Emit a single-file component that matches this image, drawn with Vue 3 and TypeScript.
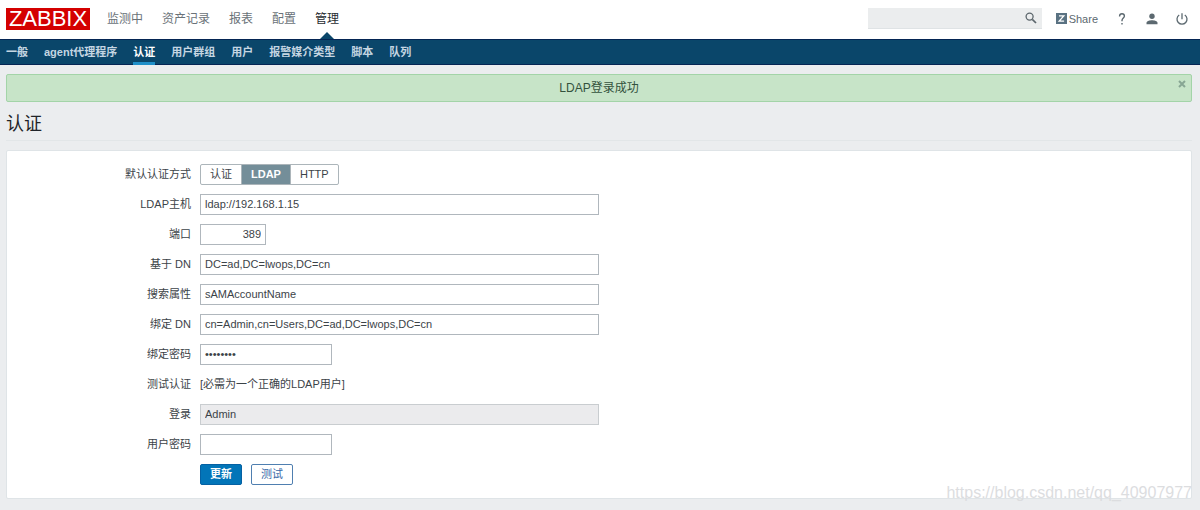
<script setup lang="ts">
import { ref } from 'vue'

interface Field {
  id: string
  label: string
  value: string
  type: 'text' | 'password'
  size: 'wide' | 'medium' | 'small'
  disabled?: boolean
}

const mainMenu = ['监测中', '资产记录', '报表', '配置', '管理']
const activeMain = '管理'
const subMenu = ['一般', 'agent代理程序', '认证', '用户群组', '用户', '报警媒介类型', '脚本', '队列']
const activeSub = '认证'

const methods = ['认证', 'LDAP', 'HTTP']
const method = ref('LDAP')
const search = ref('')
const messageVisible = ref(true)

const serverFields = ref<Field[]>([
  { id: 'host', label: 'LDAP主机', value: 'ldap://192.168.1.15', type: 'text', size: 'wide' },
  { id: 'port', label: '端口', value: '389', type: 'text', size: 'small' },
  { id: 'base-dn', label: '基于 DN', value: 'DC=ad,DC=lwops,DC=cn', type: 'text', size: 'wide' },
  { id: 'search-attribute', label: '搜索属性', value: 'sAMAccountName', type: 'text', size: 'wide' },
  { id: 'bind-dn', label: '绑定 DN', value: 'cn=Admin,cn=Users,DC=ad,DC=lwops,DC=cn', type: 'text', size: 'wide' },
  { id: 'bind-password', label: '绑定密码', value: 'password', type: 'password', size: 'medium' },
])
const userFields = ref<Field[]>([
  { id: 'login', label: '登录', value: 'Admin', type: 'text', size: 'wide', disabled: true },
  { id: 'user-password', label: '用户密码', value: '', type: 'password', size: 'medium' },
])
</script>

<template>
  <div class="page">
    <header class="top">
      <a class="logo" href="#">ZABBIX</a>
      <nav class="main-menu">
        <a v-for="item in mainMenu" :key="item" href="#" :class="{ active: item === activeMain }">{{ item }}</a>
      </nav>
      <div class="tools">
        <form class="search" @submit.prevent>
          <input v-model="search" type="text" aria-label="搜索" />
          <button type="submit" aria-label="搜索">
            <svg width="12" height="12" viewBox="0 0 12 12" fill="none" stroke="#5c666c">
              <circle cx="4.6" cy="4.6" r="3.5" stroke-width="1.3" />
              <path d="M7.3 7.3L11 11" stroke-width="1.7" />
            </svg>
          </button>
        </form>
        <a class="share" href="#">
          <svg width="11" height="11" viewBox="0 0 11 11">
            <rect width="11" height="11" fill="#5a7282" />
            <path d="M3 2.9H7.8L3.2 8.1H8.1" fill="none" stroke="#fff" stroke-width="1.3" />
          </svg>
          Share
        </a>
        <a class="icon" href="#" aria-label="帮助">
          <svg width="12" height="14" viewBox="0 0 12 14" fill="none" stroke="#5c6970" stroke-width="1.4">
            <path d="M3.6 4.5V4.1C3.6 2.5 4.6 1.8 6 1.8S8.4 2.6 8.4 4C8.4 6 6 6.1 6 8.6V9.3" />
            <path d="M6 10.9V12.4" />
          </svg>
        </a>
        <a class="icon" href="#" aria-label="用户资料">
          <svg width="12" height="12" viewBox="0 0 12 12" fill="#5c6970">
            <circle cx="6" cy="3.2" r="2.7" />
            <path d="M.5 11.2V9.8C.5 8 3.4 7.2 6 7.2S11.5 8 11.5 9.8V11.2Z" />
          </svg>
        </a>
        <a class="icon" href="#" aria-label="退出">
          <svg width="12" height="12" viewBox="0 0 12 12" fill="none" stroke="#5c6970" stroke-width="1.3">
            <path d="M3.2 2A5 5 0 1 0 8.8 2" />
            <path d="M6 .3V6.3" />
          </svg>
        </a>
      </div>
    </header>

    <nav class="sub-menu">
      <a v-for="item in subMenu" :key="item" href="#" :class="{ active: item === activeSub }">{{ item }}</a>
    </nav>

    <main>
      <div v-if="messageVisible" class="message" role="status">
        LDAP登录成功
        <button class="close" type="button" aria-label="关闭" @click="messageVisible = false">
          <svg width="8" height="8" viewBox="0 0 8 8" stroke="#88a694" stroke-width="2">
            <path d="M1 1L7 7M7 1L1 7" />
          </svg>
        </button>
      </div>
      <h1>认证</h1>

      <form class="panel" @submit.prevent>
        <div class="row">
          <span id="method-label" class="label">默认认证方式</span>
          <div class="segments" role="radiogroup" aria-labelledby="method-label">
            <label v-for="item in methods" :key="item" :class="{ checked: item === method }">
              <input v-model="method" type="radio" name="method" :value="item" />{{ item }}
            </label>
          </div>
        </div>
        <div v-for="field in serverFields" :key="field.id" class="row">
          <label class="label" :for="field.id">{{ field.label }}</label>
          <input :id="field.id" v-model="field.value" class="field" :class="field.size" :type="field.type" />
        </div>
        <div class="row">
          <span class="label">测试认证</span>
          <span class="note">[必需为一个正确的LDAP用户]</span>
        </div>
        <div v-for="field in userFields" :key="field.id" class="row">
          <label class="label" :for="field.id">{{ field.label }}</label>
          <input
            :id="field.id"
            v-model="field.value"
            class="field"
            :class="field.size"
            :type="field.type"
            :disabled="field.disabled"
          />
        </div>
        <div class="row">
          <span class="label"></span>
          <div class="actions">
            <button class="primary" type="submit">更新</button>
            <button type="button">测试</button>
          </div>
        </div>
      </form>
    </main>
    <div class="watermark">https://blog.csdn.net/qq_40907977</div>
  </div>
</template>

<style>
html {
  background: #ebedef;
}
body {
  margin: 0;
}
</style>

<style scoped>
.page {
  position: relative;
  font-family: "Liberation Sans", Arial, "Noto Sans CJK SC", sans-serif;
  font-size: 11px;
  line-height: 16px;
  color: #3c4348;
  padding-bottom: 12px;
}
.page * {
  box-sizing: border-box;
}
a {
  text-decoration: none;
  color: inherit;
}
input,
button {
  font: inherit;
  color: inherit;
  margin: 0;
}
svg {
  display: block;
}
.top {
  display: flex;
  align-items: center;
  height: 39px;
  padding: 0 12px 2px 6px;
  background: #fff;
}
.logo {
  width: 84px;
  height: 22px;
  line-height: 22px;
  font-size: 22px;
  text-align: center;
  color: #fff;
  background: #d40000;
}
.main-menu {
  display: flex;
  gap: 19px;
  align-self: stretch;
  margin-left: 17px;
  font-size: 12px;
  line-height: 39px;
  color: #6a7278;
}
.main-menu .active {
  position: relative;
  color: #262b30;
}
.main-menu .active::after {
  content: "";
  position: absolute;
  left: 50%;
  bottom: -2px;
  margin-left: -7px;
  border: 7px solid transparent;
  border-top: 0;
  border-bottom-color: #0a466a;
}
.tools {
  display: flex;
  align-items: center;
  margin-left: auto;
  color: #5c6970;
}
.search {
  display: flex;
  width: 174px;
  height: 21px;
  margin-right: 14px;
  background: #ebedee;
  border-bottom: 1px solid #dfe3e5;
}
.search input {
  flex: 1;
  min-width: 0;
  border: 0;
  padding: 0 5px;
  background: transparent;
}
.search button {
  display: flex;
  align-items: center;
  border: 0;
  padding: 0 5px;
  background: transparent;
}
.share {
  display: flex;
  align-items: center;
  gap: 2px;
  margin-right: 18px;
}
.icon + .icon {
  margin-left: 18px;
}
.sub-menu {
  display: flex;
  gap: 16px;
  height: 26px;
  padding: 0 6px;
  border-top: 1px solid #052554;
  border-bottom: 1px solid #052554;
  background: #0a466a;
  color: #c5d6e2;
  font-weight: bold;
  line-height: 24px;
}
.sub-menu .active {
  height: 25px;
  color: #fff;
  border-bottom: 3px solid #1f8fc8;
}
main {
  padding: 9px 8px 0 6px;
}
.message {
  position: relative;
  height: 28px;
  line-height: 27px;
  font-size: 12px;
  text-align: center;
  color: #33523d;
  background: #c7e4c8;
  border: 1px solid #a3d4a8;
  border-radius: 2px;
}
.close {
  position: absolute;
  top: 5px;
  right: 5px;
  border: 0;
  padding: 0;
  background: transparent;
}
h1 {
  margin: 0 0 9px;
  height: 39px;
  border-bottom: 1px solid #e2e6e8;
  font-size: 18px;
  font-weight: normal;
  line-height: 45px;
  color: #1f2429;
}
.panel {
  display: flex;
  flex-direction: column;
  gap: 9px;
  padding: 13px 0;
  background: #fff;
  border: 1px solid #dfe4e7;
  border-radius: 2px;
}
.row {
  display: flex;
  align-items: center;
  gap: 9px;
  height: 21px;
}
.label,
.note {
  padding-bottom: 2px;
}
.label {
  width: 184px;
  text-align: right;
}
.segments {
  display: flex;
  height: 21px;
  line-height: 19px;
  border: 1px solid #acb5ba;
  border-radius: 2px;
}
.segments label {
  position: relative;
  padding: 0 9px;
}
.segments label + label {
  border-left: 1px solid #acb5ba;
}
.segments input {
  position: absolute;
  inset: 0;
  opacity: 0;
}
.segments .checked {
  color: #fff;
  font-weight: bold;
  background: #748e99;
}
.field {
  height: 21px;
  padding: 0 4px 2px;
  border: 1px solid #b0b7bd;
  border-radius: 0;
  background: #fff;
}
.wide {
  width: 399px;
}
.medium {
  width: 132px;
}
.small {
  width: 66px;
  text-align: right;
}
.field:disabled {
  background: #ebebed;
  border-color: #c9cdd0;
}
.actions {
  display: flex;
  gap: 9px;
}
.actions button {
  height: 21px;
  padding: 0 9px;
  border: 1px solid #4f7fb0;
  border-radius: 2px;
  background: #fff;
  color: #3869a8;
  line-height: 19px;
}
.actions .primary {
  border-color: #0561a3;
  background: #0275b8;
  color: #fff;
  font-weight: bold;
}
.watermark {
  position: absolute;
  right: 8px;
  bottom: 8px;
  font-size: 16px;
  line-height: 20px;
  color: #dcdddf;
  pointer-events: none;
}
</style>
